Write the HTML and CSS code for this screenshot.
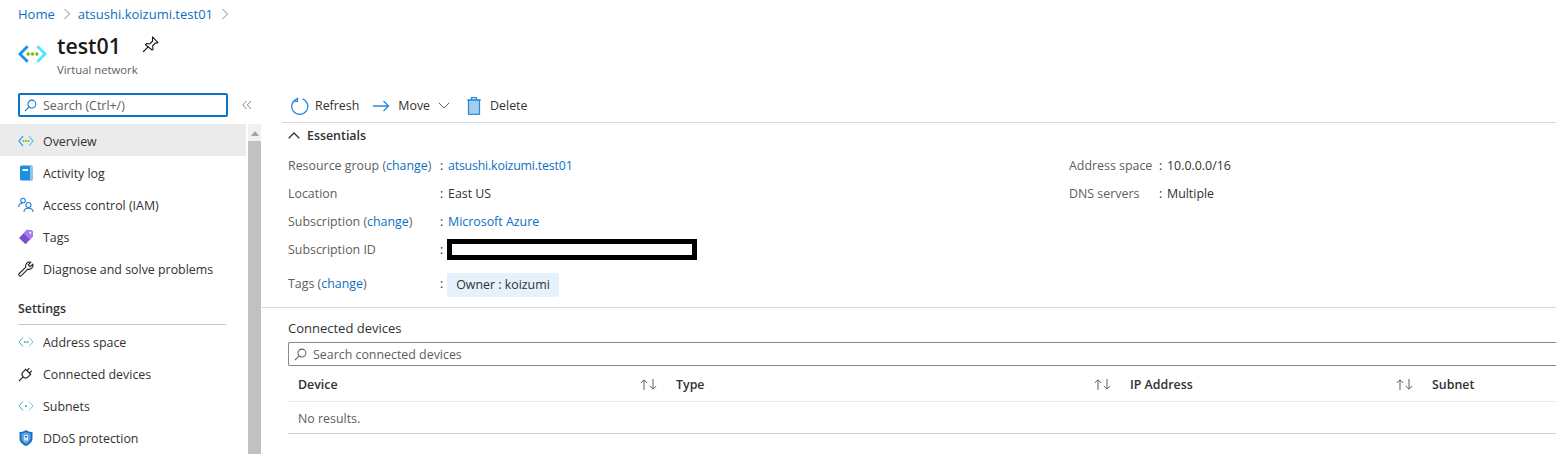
FILE: index.html
```html
<!DOCTYPE HTML>
<html>
<head>
    <meta charset='utf-8'>
    <title>test01 - Virtual network</title>
    <link rel="stylesheet" href="styles.css">
</head>
<body>
    <div class="breadcrumb">
        <a>Home</a>
        <svg class="crumbSep" viewBox="0 0 8 12"><path d="M1.5 1l5 5-5 5" /></svg>
        <a>atsushi.koizumi.test01</a>
        <svg class="crumbSep" viewBox="0 0 8 12"><path d="M1.5 1l5 5-5 5" /></svg>
    </div>

    <div class="titleBar">
        <svg class="titleIcon" viewBox="0 0 30 20">
            <path d="M10 2L2 10l8 8" fill="none" stroke="#1b93eb" stroke-width="3" />
            <path d="M20 2l8 8-8 8" fill="none" stroke="#50e6ff" stroke-width="3" />
            <circle cx="10.5" cy="10" r="1.8" fill="#7fba00" />
            <circle cx="15" cy="10" r="1.8" fill="#7fba00" />
            <circle cx="19.5" cy="10" r="1.8" fill="#7fba00" />
        </svg>
        <div>
            <div class="titleRow">
                <h1>test01</h1>
                <svg class="pinIcon" viewBox="0 0 16 16">
                    <path d="M10 1l5 5-1 .7-1.200-.3-2.800 2.800.4 3-1 1L3.300 8.100l1-1 3 .4L10.100 4.700 9.800 3.500z" fill="none" stroke="#111" stroke-width="1" />
                    <path d="M6 10L1 15" fill="none" stroke="#111" stroke-width="1.100" />
                </svg>
            </div>
            <div class="subTitle">Virtual network</div>
        </div>
    </div>

    <div class="blade">
        <div class="sideColumn">
            <div class="sideSearchRow">
                <div class="sideSearch">
                    <svg class="searchIcon" viewBox="0 0 14 14"><circle cx="8.500" cy="5.500" r="4.300" /><path d="M5.400 8.600L1 13" /></svg>
                    <span>Search (Ctrl+/)</span>
                </div>
                <svg class="collapseIcon" viewBox="0 0 10 10"><path d="M4.500 1L.8 5l3.700 4M9 1L5.300 5 9 9" /></svg>
            </div>
            <div class="sideBody">
                <nav class="sideMenu">
                    <div class="menuItem active">
                        <svg class="menuIcon" viewBox="0 0 16 12">
                            <path d="M5 1L1 6l4 5" fill="none" stroke="#1b93eb" stroke-width="1.200" />
                            <path d="M11 1l4 5-4 5" fill="none" stroke="#50c8f0" stroke-width="1.200" />
                            <circle cx="5.500" cy="6" r="1" fill="#7fba00" /><circle cx="8" cy="6" r="1" fill="#7fba00" /><circle cx="10.500" cy="6" r="1" fill="#7fba00" />
                        </svg>
                        <span>Overview</span>
                    </div>
                    <div class="menuItem">
                        <svg class="menuIcon" viewBox="0 0 16 16">
                            <rect x="2" y="0.500" width="12.500" height="15" rx="1.500" fill="#1b8fe0" />
                            <rect x="12" y="0.500" width="2.500" height="15" fill="#8fc4ea" />
                            <rect x="4.500" y="4" width="5.500" height="2" fill="#fff" />
                        </svg>
                        <span>Activity log</span>
                    </div>
                    <div class="menuItem">
                        <svg class="menuIcon" viewBox="0 0 16 16" fill="none" stroke="#2b7cd3" stroke-width="1.100">
                            <circle cx="5" cy="3.500" r="2.300" />
                            <path d="M.7 10c0-2.500 1.700-3.500 3.300-3.500" />
                            <circle cx="10.500" cy="8" r="2.500" />
                            <path d="M6 15c0-2.800 2-3.800 4.500-3.800s4.500 1 4.500 3.800" />
                        </svg>
                        <span>Access control (IAM)</span>
                    </div>
                    <div class="menuItem">
                        <svg class="menuIcon" viewBox="0 0 16 16">
                            <path d="M9 .8l5.500 1 .5 5.500-7.500 8L1 9z" fill="#7b4fc9" />
                            <path d="M9 .8l5.500 1 .5 5.500-3 3.200L5.500 4.300z" fill="#a67af4" />
                            <circle cx="12.300" cy="3.700" r="1" fill="#fff" />
                        </svg>
                        <span>Tags</span>
                    </div>
                    <div class="menuItem">
                        <svg class="menuIcon" viewBox="0 0 16 16" fill="none" stroke="#222" stroke-width="1.100">
                            <path d="M14.800 3.200l-2.600 2.500-1.900-1.900L12.800 1.200a4 4 0 0 0-5 5L1.300 12.500a1.500 1.500 0 0 0 2.100 2.200l6.400-6.500a4 4 0 0 0 5-5z" />
                        </svg>
                        <span>Diagnose and solve problems</span>
                    </div>

                    <div class="menuGroup">Settings</div>

                    <div class="menuItem">
                        <svg class="menuIcon" viewBox="0 0 16 12">
                            <path d="M5 1.500L1 6l4 4.500" fill="none" stroke="#4aa5e0" stroke-width="1" />
                            <path d="M11 1.500l4 4.500-4 4.500" fill="none" stroke="#6cc8ee" stroke-width="1" />
                            <circle cx="6.800" cy="6" r="1" fill="#7fba00" /><circle cx="9.500" cy="6" r="1" fill="#2fa8d8" />
                        </svg>
                        <span>Address space</span>
                    </div>
                    <div class="menuItem">
                        <svg class="menuIcon" viewBox="0 0 16 16" fill="none" stroke="#222" stroke-width="1.200">
                            <g transform="rotate(45 8 8)">
                                <path d="M4.500 5h7v3.500a3.500 3.500 0 0 1-7 0z" />
                                <path d="M6.300 5V1.500M9.700 5V1.500M8 12v6" />
                            </g>
                        </svg>
                        <span>Connected devices</span>
                    </div>
                    <div class="menuItem">
                        <svg class="menuIcon" viewBox="0 0 16 12">
                            <path d="M5 1.500L1 6l4 4.500" fill="none" stroke="#4aa5e0" stroke-width="1" />
                            <path d="M11 1.500l4 4.500-4 4.500" fill="none" stroke="#6cc8ee" stroke-width="1" />
                            <circle cx="8" cy="6" r="1" fill="#5aa832" />
                        </svg>
                        <span>Subnets</span>
                    </div>
                    <div class="menuItem">
                        <svg class="menuIcon" viewBox="0 0 16 16">
                            <path d="M8 0c2 1.500 4 2 6.500 2v6c0 4-3 6.500-6.500 8-3.500-1.500-6.500-4-6.500-8V2C4 2 6 1.500 8 0z" fill="#1b6fc9" />
                            <path d="M8 2c1.600 1 3 1.500 4.500 1.600V8c0 2.600-2 4.600-4.500 5.700C5.500 12.600 3.500 10.600 3.500 8V3.600C5 3.500 6.400 3 8 2z" fill="#5ea8ea" />
                            <rect x="6" y="5" width="4" height="5.500" rx=".5" fill="#dbe9f6" />
                            <rect x="7" y="6" width="2" height="1.500" fill="#555" />
                        </svg>
                        <span>DDoS protection</span>
                    </div>
                </nav>
                <div class="sideScroll">
                    <svg class="scrollUp" viewBox="0 0 8 5"><path d="M0 5l4-5 4 5z" /></svg>
                    <div class="scrollThumb"></div>
                </div>
            </div>
        </div>

        <main class="mainColumn">
            <div class="commandBar">
                <div class="command refreshCmd">
                    <svg class="cmdIcon" viewBox="0 0 18 18" fill="none" stroke="#2b88d8" stroke-width="1.300">
                        <path d="M11.500 1.800a8 8 0 1 1-5.500 0" />
                        <path d="M6.500 0.500v3.800H2.800" />
                    </svg>
                    <span>Refresh</span>
                </div>
                <div class="command moveCmd">
                    <svg class="cmdIcon moveIcon" viewBox="0 0 17 12" fill="none" stroke="#2b88d8" stroke-width="1.300">
                        <path d="M0 6h15.500M10.500 1l5 5-5 5" />
                    </svg>
                    <span>Move</span>
                    <svg class="cmdCaret" viewBox="0 0 12 7"><path d="M.7 .7L6 6l5.300-5.300" /></svg>
                </div>
                <div class="command">
                    <svg class="cmdIcon trashIcon" viewBox="0 0 14 18">
                        <rect x="1.500" y="3" width="11" height="14.300" fill="#a5cdf0" stroke="#2b88d8" stroke-width="1.200" />
                        <path d="M0 3h14M4.500 3V.7h5V3" fill="none" stroke="#2b88d8" stroke-width="1.200" />
                    </svg>
                    <span>Delete</span>
                </div>
            </div>

            <section class="essentials">
                <div class="essHeader">
                    <svg class="essCaret" viewBox="0 0 12 7"><path d="M.7 6.300L6 1l5.300 5.300" /></svg>
                    <span>Essentials</span>
                </div>
                <div class="essGrid">
                    <div class="essCol">
                        <div class="essRow"><span class="essKey">Resource group (<a>change</a>)</span><span class="essColon">:</span><a class="tightLink">atsushi.koizumi.test01</a></div>
                        <div class="essRow"><span class="essKey">Location</span><span class="essColon">:</span><span>East US</span></div>
                        <div class="essRow"><span class="essKey">Subscription (<a>change</a>)</span><span class="essColon">:</span><a>Microsoft Azure</a></div>
                        <div class="essRow"><span class="essKey">Subscription ID</span><span class="essColon">:</span><span class="redacted"></span></div>
                        <div class="essRow tagRow"><span class="essKey">Tags (<a>change</a>)</span><span class="essColon">:</span><span class="tagPill">Owner : koizumi</span></div>
                    </div>
                    <div class="essCol rightCol">
                        <div class="essRow"><span class="essKey">Address space</span><span class="essColon">:</span><span>10.0.0.0/16</span></div>
                        <div class="essRow"><span class="essKey">DNS servers</span><span class="essColon">:</span><span>Multiple</span></div>
                    </div>
                </div>
            </section>

            <section class="devices">
                <div class="devicesTitle">Connected devices</div>
                <div class="deviceSearch">
                    <svg class="searchIcon grey" viewBox="0 0 14 14"><circle cx="8.500" cy="5.500" r="4.300" /><path d="M5.400 8.600L1 13" /></svg>
                    <span>Search connected devices</span>
                </div>
                <div class="tableHead">
                    <div class="headCell"><span>Device</span><svg class="sortIcon" viewBox="0 0 17 11"><path d="M4 11V1M.8 4L4 .8 7.200 4M13 0v10M9.800 7l3.200 3.200L16.200 7" /></svg></div>
                    <div class="headCell"><span>Type</span><svg class="sortIcon" viewBox="0 0 17 11"><path d="M4 11V1M.8 4L4 .8 7.200 4M13 0v10M9.800 7l3.200 3.200L16.200 7" /></svg></div>
                    <div class="headCell"><span>IP Address</span><svg class="sortIcon" viewBox="0 0 17 11"><path d="M4 11V1M.8 4L4 .8 7.200 4M13 0v10M9.800 7l3.200 3.200L16.200 7" /></svg></div>
                    <div class="headCell"><span>Subnet</span></div>
                </div>
                <div class="tableEmpty">No results.</div>
            </section>
        </main>
    </div>
</body>
</html>
```

FILE: styles.css
```css
html, body {
    margin: 0;
    padding: 0;
}

body {
    width: 1556px;
    height: 454px;
    overflow: hidden;
    background-color: #fff;
    color: #323130;
    font-family: "Open Sans", "Noto Sans", sans-serif;
    font-size: 12.4px;
}

a {
    color: #0b6fc2;
}

.breadcrumb {
    display: flex;
    align-items: center;
    height: 28px;
    padding-left: 18px;
    font-size: 13px;
}

.crumbSep {
    width: 8px;
    height: 12px;
    margin: 0 7px 0 8px;
    fill: none;
    stroke: #8a8886;
}

.titleBar {
    display: flex;
    height: 65px;
    padding-left: 18px;
}

.titleIcon {
    width: 29px;
    height: 20px;
    margin: 16px 10px 0 0;
}

.titleRow {
    display: flex;
    align-items: center;
    height: 35px;
}

h1 {
    margin: 0;
    font-size: 21.3px;
    font-weight: 600;
    color: #1b1a19;
}

.pinIcon {
    width: 17px;
    height: 17px;
    margin: 0 0 2px 21px;
}

.subTitle {
    margin-top: -1px;
    font-size: 11.3px;
    color: #605e5c;
}

.blade {
    display: flex;
    height: 361px;
}

.sideColumn {
    flex: 0 0 262px;
    overflow: hidden;
}

.sideSearchRow {
    display: flex;
    align-items: center;
    height: 31px;
    padding: 0 0 0 18px;
}

.sideSearch {
    display: flex;
    align-items: center;
    box-sizing: border-box;
    width: 210px;
    height: 24px;
    margin-top: -7px;
    border: 2px solid #0f74c4;
    border-radius: 2px;
    color: #605e5c;
}

.searchIcon {
    width: 13px;
    height: 13px;
    margin: 0 6px 0 4px;
    fill: none;
    stroke: #0f74c4;
    stroke-width: 1.100;
}

.searchIcon.grey {
    margin-left: 5px;
    stroke: #605e5c;
}

.collapseIcon {
    width: 10px;
    height: 10px;
    margin: -7px 0 0 14px;
    fill: none;
    stroke: #8a8886;
}

.sideBody {
    display: flex;
    height: 330px;
}

.sideMenu {
    flex: 0 0 246px;
}

.menuItem {
    display: flex;
    align-items: center;
    box-sizing: border-box;
    height: 32px;
    padding: 2px 0 0 18px;
}

.menuItem.active {
    background-color: #ebebeb;
}

.menuIcon {
    flex: none;
    width: 16px;
    height: 16px;
    margin-right: 9px;
}

.menuGroup {
    height: 24px;
    margin: 9px 20px 0 18px;
    padding-top: 7px;
    border-bottom: 1px solid #c8c6c4;
    font-weight: 600;
    line-height: 17px;
}

.sideScroll {
    width: 13px;
    margin-left: 2px;
    background-color: #f1f1f1;
}

.scrollUp {
    display: block;
    width: 8px;
    height: 5px;
    margin: 7px auto 5px;
    fill: #a3a3a3;
}

.scrollThumb {
    height: 320px;
    background-color: #c1c1c1;
}

.mainColumn {
    flex: 1;
    min-width: 0;
}

.commandBar {
    display: flex;
    align-items: center;
    height: 25px;
    margin-left: 20px;
    padding: 0 0 4px 9px;
    border-bottom: 1px solid #d6d6d6;
}

.command {
    display: flex;
    align-items: center;
}

.refreshCmd {
    margin-right: 14px;
}

.moveCmd {
    margin-right: 17px;
}

.cmdIcon {
    width: 18px;
    height: 18px;
    margin-right: 6px;
}

.moveIcon {
    width: 17px;
    height: 12px;
    margin-right: 8px;
}

.trashIcon {
    width: 14px;
    margin-right: 9px;
}

.cmdCaret {
    width: 12px;
    height: 7px;
    margin-left: 8px;
    fill: none;
    stroke: #605e5c;
}

.essentials {
    height: 184px;
    padding-left: 26px;
    border-bottom: 1px solid #d6d6d6;
}

.essHeader {
    display: flex;
    align-items: center;
    height: 24px;
    font-weight: 600;
}

.essCaret {
    width: 12px;
    height: 7px;
    margin-right: 7px;
    fill: none;
    stroke: #323130;
    stroke-width: 1.300;
}

.essGrid {
    display: flex;
    margin-top: 4px;
}

.essCol {
    flex: 0 0 781px;
    color: #605e5c;
}

.rightCol {
    flex: 1;
}

.rightCol .essKey {
    width: 90px;
}

.essRow {
    display: flex;
    align-items: center;
    height: 28px;
}

.essRow > span:last-child {
    color: #323130;
}

.essKey {
    flex: none;
    width: 152px;
}

.essColon {
    flex: none;
    width: 8px;
    color: #323130;
}

.tightLink {
    letter-spacing: -0.2px;
}

.redacted {
    box-sizing: border-box;
    width: 250px;
    height: 21px;
    margin: 0 0 0 -1px;
    border: 5px solid #000;
}

.tagRow {
    height: 40px;
}

.tagPill {
    width: 112px;
    height: 24px;
    margin: 4px 0 0 -1px;
    line-height: 24px;
    text-align: center;
    border-radius: 2px;
    background-color: #e5f1fb;
}

.devices {
    padding-left: 26px;
}

.devicesTitle {
    height: 34px;
    line-height: 41px;
    font-size: 13px;
}

.deviceSearch {
    display: flex;
    align-items: center;
    box-sizing: border-box;
    height: 24px;
    border: 1px solid #8a8886;
    border-right: 0;
    border-radius: 2px 0 0 2px;
    color: #605e5c;
}

.tableHead {
    display: grid;
    grid-template-columns: 378px 454px 302px 1fr;
    height: 34px;
    padding-top: 1px;
    border-bottom: 1px solid #e8e8e8;
    font-weight: 600;
}

.headCell {
    display: flex;
    align-items: center;
    justify-content: space-between;
    padding: 0 9px 0 10px;
}

.sortIcon {
    width: 17px;
    height: 11px;
    fill: none;
    stroke: #605e5c;
}

.tableEmpty {
    height: 31px;
    padding-left: 10px;
    line-height: 33px;
    border-bottom: 1px solid #d0d0d0;
    color: #605e5c;
}
```
